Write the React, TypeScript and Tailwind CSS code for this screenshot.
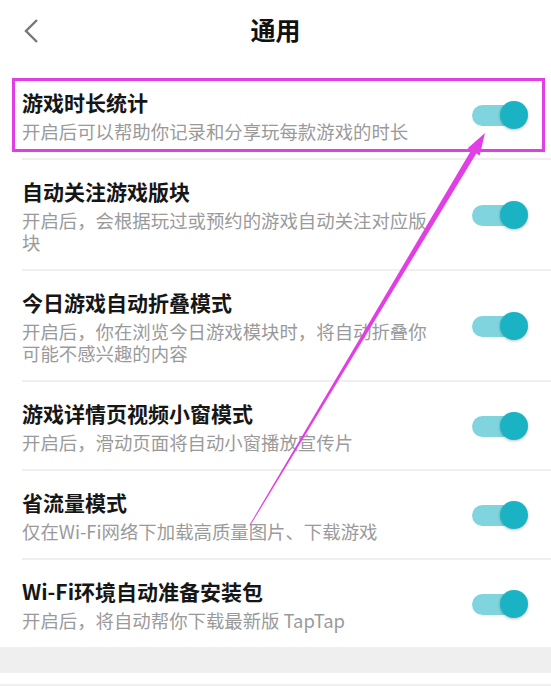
import React from "react";

const rows = [
  { title: "游戏时长统计", desc: "开启后可以帮助你记录和分享玩每款游戏的时长" },
  { title: "自动关注游戏版块", desc: "开启后，会根据玩过或预约的游戏自动关注对应版块" },
  { title: "今日游戏自动折叠模式", desc: "开启后，你在浏览今日游戏模块时，将自动折叠你可能不感兴趣的内容" },
  { title: "游戏详情页视频小窗模式", desc: "开启后，滑动页面将自动小窗播放宣传片" },
  { title: "省流量模式", desc: "仅在Wi-Fi网络下加载高质量图片、下载游戏" },
  { title: "Wi-Fi环境自动准备安装包", desc: "开启后，将自动帮你下载最新版 TapTap" },
];

function Toggle() {
  return (
    <div className="relative h-[29px] w-[58px] shrink-0">
      <div className="absolute left-[1px] top-[4px] h-[21px] w-[50px] rounded-full bg-[#80d4dd]" />
      <div className="absolute right-[1px] top-0 h-[28px] w-[28px] rounded-full bg-[#1ab3c3] shadow-[0_1px_3px_rgba(0,0,0,0.25)]" />
    </div>
  );
}

export default function App() {
  return (
    <div
      className="relative h-[686px] w-[551px] overflow-hidden bg-white"
      style={{ fontFamily: '"Noto Sans CJK SC", "Noto Sans", sans-serif' }}
    >
      <header className="relative flex h-[71px] items-start justify-center pt-[11px]">
        <svg className="absolute left-[22px] top-[18px]" width="20" height="26" viewBox="0 0 20 26">
          <path d="M15 2 L4 13 L15 24" fill="none" stroke="#777" strokeWidth="2.4" />
        </svg>
        <h1 className="text-[25px] font-bold leading-[36px] text-[#111]">通用</h1>
      </header>

      <div className="flex flex-col">
        {rows.map((r, i) => (
          <div key={r.title} className="flex flex-col pl-[22px]">
            <div className="flex items-center justify-between pb-[16px] pr-[22px] pt-[17px]">
              <div className="flex w-[418px] flex-col gap-[4px]">
                <p className="text-[21px] font-bold leading-[28px] text-[#161616]">{r.title}</p>
                <p className="text-[18.4px] leading-[22px] text-[#9a9a9a]">{r.desc}</p>
              </div>
              <Toggle />
            </div>
            {i < rows.length - 1 && <div className="h-[2px] bg-[#efefef]" />}
          </div>
        ))}
      </div>

      <div className="h-[26px] bg-[#efefef]" />
      <div className="mt-[11px] h-[2px] bg-[#efefef]" />

      <div className="pointer-events-none absolute left-[12px] top-[78px] h-[74px] w-[533px] border-[3px] border-[#e23ee6]" />

      <svg className="pointer-events-none absolute left-0 top-0" width="551" height="686" viewBox="0 0 551 686">
        <polygon
          points="250.4,525.3 249.6,524.7 471.1,150.4 467.7,148.3 485,133 479.7,155.5 476.3,153.4"
          fill="#e23ee6"
        />
      </svg>
    </div>
  );
}
